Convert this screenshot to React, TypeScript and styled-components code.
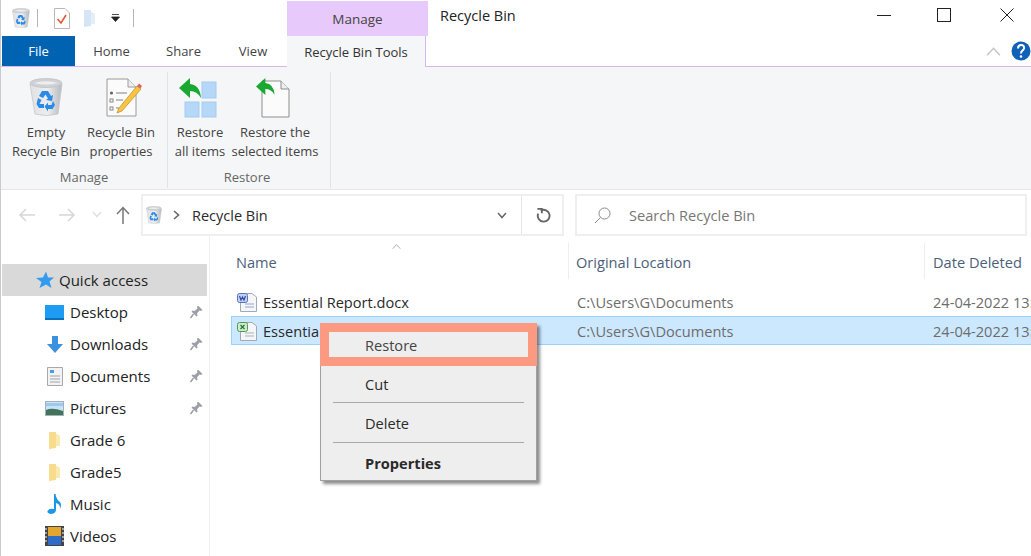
import React from "react";
import styled, { createGlobalStyle } from "styled-components";

const GlobalStyle = createGlobalStyle`
  html, body {
    margin: 0;
    padding: 0;
    background: #fff;
    overflow: hidden;
  }
  * {
    box-sizing: border-box;
  }
`;

const Page = styled.div`
  width: 1031px;
  height: 556px;
  display: flex;
  flex-direction: column;
  overflow: hidden;
  position: relative;
  background: #fff;
  color: #2a2a2a;
  font-family: "Open Sans", "Noto Sans", sans-serif;
  font-size: 15px;
  border-left: 1px solid #c9c9d2;
`;

const TitleRow = styled.div`
  height: 36px;
  display: flex;
  flex: none;
`;

const QuickBar = styled.div`
  width: 286px;
  display: flex;
  align-items: center;
  padding-left: 11px;
`;

const QuickDivider = styled.div<{ $left: number; $right: number }>`
  width: 1px;
  height: 18px;
  background: #b5b5b5;
  margin: 0 ${(p) => p.$right}px 0 ${(p) => p.$left}px;
`;

const QuickSpacer = styled.span<{ $width: number }>`
  width: ${(p) => p.$width}px;
  flex: none;
`;

const ManageTab = styled.div`
  width: 141px;
  height: 35px;
  margin-top: 1px;
  background: #e8c9fb;
  color: #444;
  font-size: 13.5px;
  display: flex;
  align-items: center;
  justify-content: center;
`;

const WindowTitle = styled.div`
  margin-left: 12px;
  font-size: 14.5px;
  line-height: 32px;
  flex: 1;
  color: #222;
`;

const WindowControls = styled.div`
  display: flex;
  align-items: flex-start;
  padding: 8px 17px 0 0;
`;

const WindowControl = styled.span<{ $left?: number }>`
  display: flex;
  margin-left: ${(p) => p.$left ?? 0}px;
`;

const TabRow = styled.div`
  height: 31px;
  flex: none;
  display: flex;
  border-bottom: 1px solid #d6b8ee;
  padding-left: 1px;
`;

const FileTab = styled.div`
  width: 73px;
  height: 30px;
  background: #0063b1;
  color: #fff;
  font-size: 13px;
  display: flex;
  align-items: center;
  justify-content: center;
`;

const Tab = styled.div<{ $width: number }>`
  width: ${(p) => p.$width}px;
  height: 30px;
  font-size: 13px;
  color: #444;
  display: flex;
  align-items: center;
  justify-content: center;
`;

const ActiveTab = styled(Tab)`
  height: 31px;
  background: #f5f6f7;
  color: #333;
  border-right: 1px solid #d6b8ee;
  margin-right: auto;
`;

const TabTools = styled.div`
  display: flex;
  align-items: center;
  height: 30px;
  gap: 10px;
`;

const Ribbon = styled.div`
  height: 123px;
  flex: none;
  background: #f5f6f7;
  display: flex;
  border-bottom: 1px solid #e6e6e6;
`;

const RibbonGroup = styled.div<{ $width: number; $pad: number }>`
  width: ${(p) => p.$width}px;
  display: flex;
  flex-direction: column;
  align-items: stretch;
  padding-left: ${(p) => p.$pad}px;
  border-right: 1px solid #e2e3e5;
  margin-top: 5px;
  margin-bottom: 1px;
`;

const RibbonButtons = styled.div`
  display: flex;
  flex: 1;
`;

const RibbonButton = styled.div<{ $width: number }>`
  width: ${(p) => p.$width}px;
  display: flex;
  flex-direction: column;
  align-items: center;
  padding-top: 5px;
`;

const RibbonIcon = styled.div<{ $shift?: number }>`
  height: 41px;
  display: flex;
  align-items: center;
  justify-content: center;
  margin-left: ${(p) => p.$shift ?? 0}px;
`;

const RibbonLabel = styled.div`
  margin-top: 5px;
  font-size: 13px;
  line-height: 19px;
  text-align: center;
  white-space: nowrap;
  color: #444;
`;

const GroupLabel = styled.div<{ $shift: number }>`
  text-align: center;
  font-size: 13px;
  line-height: 20px;
  height: 21px;
  color: #666;
  margin-left: ${(p) => p.$shift}px;
`;

const AddressRow = styled.div`
  height: 46px;
  flex: none;
  padding-top: 4px;
  padding-right: 4px;
  display: flex;
  align-items: flex-start;
`;

const NavButtons = styled.div`
  width: 140px;
  height: 41px;
  display: flex;
  align-items: center;
  padding-left: 17px;
`;

const NavSlot = styled.span<{ $left: number }>`
  display: flex;
  margin-left: ${(p) => p.$left}px;
`;

const AddressBox = styled.div`
  width: 423px;
  height: 42px;
  background: #fff;
  border: 2px solid #efefef;
  display: flex;
  align-items: center;
  padding-left: 3px;
`;

const Crumb = styled.span`
  display: flex;
  margin-left: 11px;
`;

const AddressText = styled.div`
  margin-left: 12px;
  flex: 1;
  font-size: 14.5px;
  color: #2a2a2a;
`;

const AddressTool = styled.div<{ $divider?: boolean }>`
  width: ${(p) => (p.$divider ? 41 : 38)}px;
  height: 100%;
  display: flex;
  align-items: center;
  justify-content: center;
  border-left: ${(p) => (p.$divider ? "1px solid #e5e5e5" : "none")};
`;

const SearchBox = styled.div`
  margin-left: 11px;
  flex: 1;
  height: 42px;
  background: #fff;
  border: 2px solid #efefef;
  display: flex;
  align-items: center;
  padding-left: 17px;
  gap: 18px;
  font-size: 14.6px;
  color: #777;
`;

const Body = styled.div`
  flex: 1;
  display: flex;
  min-height: 0;
  position: relative;
`;

const Sidebar = styled.div`
  width: 209px;
  flex: none;
  border-right: 1px solid #f1f1f1;
  padding: 28px 0 0 1px;
`;

const NavRow = styled.div<{ $active?: boolean; $indent: number; $gap: number }>`
  height: 32px;
  display: flex;
  align-items: center;
  padding: 0 6px 0 ${(p) => p.$indent}px;
  gap: ${(p) => p.$gap}px;
  background: ${(p) => (p.$active ? "#d9d9d9" : "transparent")};
  width: ${(p) => (p.$active ? "205px" : "207px")};
  font-size: 15px;
  color: #222;
`;

const NavLabel = styled.span`
  flex: 1;
`;

const NavIconSlot = styled.span`
  width: 19px;
  display: flex;
  justify-content: center;
  flex: none;
`;

const Main = styled.div`
  flex: 1;
  min-width: 0;
  position: relative;
`;

const SortArrow = styled.div`
  position: absolute;
  left: 182px;
  top: 7px;
  line-height: 0;
`;

const HeaderRow = styled.div`
  height: 36px;
  margin-top: 7px;
  display: flex;
  align-items: center;
  color: #4c607a;
  font-size: 14.6px;
`;

const HeaderCell = styled.div<{ $width: number; $pad: number; $line?: boolean }>`
  width: ${(p) => p.$width}px;
  height: 100%;
  flex: none;
  padding-left: ${(p) => p.$pad}px;
  padding-top: 1px;
  display: flex;
  align-items: center;
  white-space: nowrap;
  border-left: ${(p) => (p.$line ? "1px solid #eeeeee" : "none")};
`;

const Rows = styled.div`
  margin-top: 8px;
  margin-left: 21px;
`;

const FileRow = styled.div<{ $selected?: boolean }>`
  height: 29px;
  display: flex;
  align-items: center;
  background: ${(p) => (p.$selected ? "#cce8ff" : "transparent")};
  border: 1px solid ${(p) => (p.$selected ? "#99d1ff" : "transparent")};
  border-right: none;
  padding-top: 1px;
  white-space: nowrap;
  font-size: 14.6px;
`;

const NameCell = styled.div`
  width: 345px;
  flex: none;
  display: flex;
  align-items: center;
  gap: 6px;
  padding-left: 5px;
  color: #2a2a2a;
`;

const LocationCell = styled.div`
  width: 356px;
  flex: none;
  color: #6d6d6d;
`;

const DateCell = styled.div`
  flex: none;
  color: #6d6d6d;
`;

const ContextMenu = styled.div`
  position: absolute;
  left: 319px;
  top: 87px;
  width: 217px;
  height: 158px;
  background: #eeeeee;
  border: 1px solid #a0a0a0;
  box-shadow: 3px 3px 3px rgba(0, 0, 0, 0.45);
  font-size: 14.6px;
  color: #2a2a2a;
`;

const RestoreItem = styled.div`
  margin: -1px -1px 0;
  height: 43px;
  border: 9px solid #fb9a80;
  padding-left: 36px;
  display: flex;
  align-items: center;
  color: #444;
`;

const MenuItem = styled.div<{ $height: number; $bold?: boolean }>`
  height: ${(p) => p.$height}px;
  padding-left: 44px;
  display: flex;
  align-items: center;
  font-weight: ${(p) => (p.$bold ? 700 : 400)};
`;

const MenuDivider = styled.div`
  height: 1px;
  background: #a8a8a8;
  margin: 0 12px;
`;

const RecycleIcon = ({ size }: { size: number }) => (
  <svg width={size} height={size * 1.15} viewBox="0 0 34 39">
    <defs>
      <linearGradient id="binFill" x1="0" x2="1" y1="0" y2="0">
        <stop offset="0" stopColor="#dfe1e3" />
        <stop offset="0.55" stopColor="#eceeef" />
        <stop offset="1" stopColor="#b4b8bc" />
      </linearGradient>
    </defs>
    <path d="M1 6 L33 6 L29 36 Q17 39 6 36 Z" fill="url(#binFill)" stroke="#c5c8cb" strokeWidth="0.8" />
    <ellipse cx="17" cy="5" rx="16" ry="4.5" fill="#cfd2d5" stroke="#bfc2c5" strokeWidth="0.8" />
    <path d="M5 5 Q17 1.500 29 5 Q17 8 5 5 Z" fill="#eeeeee" />
    <path d="M13 13 L19 13 L22 18 L24 17 L23 23 L17 22 L19 20.500 L16.500 16.500 L14 20 L10 18 Z" fill="#2a8ae6" />
    <path d="M9 20 L12.500 22 L10.500 26 L15 26 L15 30 L10 30 L7.500 26 Z" fill="#2a8ae6" />
    <path d="M24 23 L26 27 L23.500 31 L19 31 L19 33.500 L15.500 28.500 L19 24.500 L19 27 L22.500 27 Z" fill="#2a8ae6" />
  </svg>
);

const PropertiesIcon = () => (
  <svg width="36" height="39" viewBox="0 0 36 39">
    <path d="M1 1 H22 L30 9 V38 H1 Z" fill="#fbfbfb" stroke="#9a9a9a" />
    <path d="M22 1 V9 H30" fill="#eee" stroke="#9a9a9a" />
    <circle cx="5.500" cy="15" r="1.600" fill="#666" />
    <rect x="4" y="21" width="3" height="3" fill="none" stroke="#888" />
    <rect x="4" y="29" width="3" height="3" fill="none" stroke="#888" />
    <path d="M10 15 H21 M10 22 H17 M10 30 H13" stroke="#aaa" strokeWidth="1.500" />
    <path d="M11 35 L13 30 L31 8 L35 11 L16 33 Z" fill="#f6c544" stroke="#c08a1c" strokeWidth="0.7" />
    <path d="M31 8 L33 5.500 L36 8 L34.500 10.500 Z" fill="#e0635f" />
  </svg>
);

const GreenArrow = () => (
  <path d="M0 10 L11 0 L11 6 Q21 7 22 20 Q18 13 11 13 L11 20 Z" fill="#19a831" />
);

const RestoreAllIcon = () => (
  <svg width="38" height="40" viewBox="0 0 38 40">
    <rect x="23" y="4" width="14" height="16" fill="#b6d8f8" stroke="#a5cbef" />
    <rect x="6" y="24" width="14" height="15" fill="#b6d8f8" stroke="#a5cbef" />
    <rect x="23" y="24" width="14" height="15" fill="#b6d8f8" stroke="#a5cbef" />
    <GreenArrow />
  </svg>
);

const RestoreSelectedIcon = () => (
  <svg width="34" height="40" viewBox="0 0 34 40">
    <path d="M6 3 H25 L33 11 V39 H6 Z" fill="#fbfbfb" stroke="#8d8d8d" />
    <path d="M25 3 V11 H33" fill="#eee" stroke="#8d8d8d" />
    <g transform="scale(0.85)">
      <GreenArrow />
    </g>
  </svg>
);

const CheckDocIcon = () => (
  <svg width="16" height="21" viewBox="0 0 16 21">
    <path d="M0.500 0.500 H11 L15.500 5 V20.500 H0.500 Z" fill="#fff" stroke="#b9b9b9" />
    <path d="M3.500 11 L7 15 L12 7" fill="none" stroke="#e2572f" strokeWidth="1.600" />
  </svg>
);

const SmallFolder = ({ pale }: { pale?: boolean }) => (
  <svg width="14" height="19" viewBox="0 0 14 19">
    <path d="M1 1 H8 L8 3 L12 5 V15 L8 15 L8 17 L1 18 Z" fill={pale ? "#d6e5f5" : "#f8dc8c"} />
    <path d="M8 3 L12 5 V15 H8 Z" fill={pale ? "#e3eef9" : "#fbe9b0"} />
  </svg>
);

const DropArrow = () => (
  <svg width="9" height="8" viewBox="0 0 9 8">
    <path d="M1 0.500 H8 M0.500 3 H8.500 L4.500 7.500 Z" fill="#222" stroke="#222" strokeWidth="0.8" />
  </svg>
);

const MinimizeIcon = () => (
  <svg width="14" height="14" viewBox="0 0 14 14">
    <path d="M0 7.500 H14" stroke="#222" />
  </svg>
);

const MaximizeIcon = () => (
  <svg width="14" height="14" viewBox="0 0 14 14">
    <rect x="0.500" y="0.500" width="13" height="13" fill="none" stroke="#222" />
  </svg>
);

const CloseIcon = () => (
  <svg width="14" height="14" viewBox="0 0 14 14">
    <path d="M0.500 0.500 L13.500 13.500 M13.500 0.500 L0.500 13.500" stroke="#222" />
  </svg>
);

const HelpIcon = () => (
  <svg width="20" height="20" viewBox="0 0 20 20">
    <circle cx="10" cy="10" r="9.500" fill="#0f62b8" />
    <path d="M7 7.500 Q7 4 10 4 Q13.500 4 13 7.500 Q12.500 9 11 10 Q10 11 10 12.500" fill="none" stroke="#fff" strokeWidth="2" />
    <circle cx="10" cy="15.500" r="1.300" fill="#fff" />
  </svg>
);

const ChevronUp = ({ color, w, h }: { color: string; w: number; h: number }) => (
  <svg width={w} height={h} viewBox="0 0 14 8">
    <path d="M1 7.500 L7 1 L13 7.500" fill="none" stroke={color} strokeWidth="1.300" />
  </svg>
);

const ArrowLeft = ({ flip }: { flip?: boolean }) => (
  <svg width="18" height="14" viewBox="0 0 18 14" style={flip ? { transform: "scaleX(-1)" } : undefined}>
    <path d="M17 7 H2 M8 1 L2 7 L8 13" fill="none" stroke="#d6d6d6" strokeWidth="1.500" />
  </svg>
);

const SmallChevron = ({ color }: { color: string }) => (
  <svg width="10" height="7" viewBox="0 0 10 7">
    <path d="M1 1 L5 5.500 L9 1" fill="none" stroke={color} strokeWidth="1.500" />
  </svg>
);

const ArrowUp = () => (
  <svg width="14" height="18" viewBox="0 0 14 18">
    <path d="M7 18 V2 M1 8 L7 1.500 L13 8" fill="none" stroke="#777" strokeWidth="1.500" />
  </svg>
);

const CrumbChevron = () => (
  <svg width="7" height="10" viewBox="0 0 7 10">
    <path d="M1 1 L5.500 5 L1 9" fill="none" stroke="#666" strokeWidth="1.600" />
  </svg>
);

const RefreshIcon = () => (
  <svg width="15" height="15" viewBox="0 0 16 16" style={{ marginLeft: 3 }}>
    <path d="M5 2.800 A6.300 6.300 0 1 1 2.300 6" fill="none" stroke="#666" strokeWidth="2" />
    <path d="M1.500 0.800 H6.200 V5.500" fill="none" stroke="#666" strokeWidth="2" />
  </svg>
);

const SearchIcon = () => (
  <svg width="17" height="17" viewBox="0 0 17 17">
    <circle cx="10.500" cy="6.500" r="5.500" fill="none" stroke="#8a8a8a" />
    <path d="M6.500 10.500 L1 16" stroke="#8a8a8a" />
  </svg>
);

const StarIcon = () => (
  <svg width="18" height="18" viewBox="0 0 18 18">
    <path d="M10 0.500 L12 6.500 L18 6.500 L13.500 10.500 L15.500 17 L10 13.500 L3.500 17 L5.500 11 L0 7 L7 6.500 Z" fill="#339af0" />
  </svg>
);

const PinIcon = () => (
  <svg width="13" height="14" viewBox="0 0 13 14">
    <path d="M8 0.500 L12.500 5 L11 6 L9.500 5.500 L7 8.500 L7.500 10.500 L6.500 11.500 L1.500 6.500 L2.500 5.500 L4.500 6 L7.500 3.500 L7 2 Z" fill="#9aa0a6" />
    <path d="M3.500 9 L0.500 13" stroke="#9aa0a6" strokeWidth="1.500" />
  </svg>
);

const DesktopIcon = () => (
  <svg width="19" height="15" viewBox="0 0 19 15">
    <rect width="19" height="15" fill="#1c9cf2" />
    <rect y="13" width="19" height="2" fill="#0b6fbd" />
  </svg>
);

const DownloadIcon = () => (
  <svg width="16" height="17" viewBox="0 0 16 17">
    <path d="M5 0 H11 V8 H16 L8 17 L0 8 H5 Z" fill="#3d8fe0" />
  </svg>
);

const DocumentsIcon = () => (
  <svg width="16" height="19" viewBox="0 0 16 19">
    <path d="M0.500 0.500 H15.500 V18.500 H0.500 Z" fill="#f3f3f3" stroke="#a8a8a8" />
    <rect x="3" y="3" width="4" height="3" fill="#4a9be3" />
    <path d="M3 9 H13 M3 12 H13 M3 15 H13" stroke="#9aa5ad" />
  </svg>
);

const PicturesIcon = () => (
  <svg width="19" height="15" viewBox="0 0 19 15">
    <rect x="0.500" y="0.500" width="18" height="14" fill="#c9e2f7" stroke="#a7b0b8" />
    <path d="M1 9 Q7 6 18 10 V14 H1 Z" fill="#41755a" />
    <rect x="1" y="2" width="17" height="3" fill="#9cc9ee" />
  </svg>
);

const MusicIcon = () => (
  <svg width="15" height="20" viewBox="0 0 15 20">
    <path d="M7 0 H8.500 Q9 5 13 8 Q15 11 13 15 Q13.500 10 9 9 V16 Q8.500 20 3.500 20 Q0 19.500 0.500 17 Q2 14 7 15 Z" fill="#1997e8" />
  </svg>
);

const VideosIcon = () => (
  <svg width="19" height="20" viewBox="0 0 19 20">
    <rect width="19" height="20" fill="#444" />
    <rect x="3" y="1" width="13" height="9" fill="#e3a72f" />
    <rect x="3" y="10" width="13" height="9" fill="#2f6bc9" />
    <path d="M1 2 V18 M18 2 V18" stroke="#ddd" strokeWidth="1.200" strokeDasharray="2 2" />
  </svg>
);

const OfficeFileIcon = ({ kind }: { kind: "word" | "excel" }) => (
  <svg width="20" height="20" viewBox="0 0 20 20">
    <path d="M5 1.500 H15 L19.500 5 V19.500 H3.500 V10 Z" fill="#f4f6f9" stroke="#a2a9b3" />
    <path d="M8 12 H17 M8 15 H17" stroke={kind === "word" ? "#8fa6d3" : "#a7b5a7"} />
    <rect x="0.500" y="1.500" width="10" height="9" rx="2" fill={kind === "word" ? "#c5cff0" : "#d0ead0"} stroke={kind === "word" ? "#5a6fc0" : "#4b9a55"} />
    <path
      d={kind === "word" ? "M2.500 4 L4 8 L5.500 5 L7 8 L8.500 4" : "M3.500 4 L7.500 8 M7.500 4 L3.500 8"}
      fill="none"
      stroke={kind === "word" ? "#2b4ea8" : "#1f7a31"}
      strokeWidth="1.200"
    />
  </svg>
);

const navItems = [
  { label: "Desktop", icon: <DesktopIcon />, pinned: true },
  { label: "Downloads", icon: <DownloadIcon />, pinned: true },
  { label: "Documents", icon: <DocumentsIcon />, pinned: true },
  { label: "Pictures", icon: <PicturesIcon />, pinned: true },
  { label: "Grade 6", icon: <SmallFolder />, pinned: false },
  { label: "Grade5", icon: <SmallFolder />, pinned: false },
  { label: "Music", icon: <MusicIcon />, pinned: false },
  { label: "Videos", icon: <VideosIcon />, pinned: false },
];

const App = () => {
  return (
    <Page>
      <GlobalStyle />
      <TitleRow>
        <QuickBar>
          <RecycleIcon size={18} />
          <QuickDivider $left={7} $right={16} />
          <CheckDocIcon />
          <QuickSpacer $width={13} />
          <SmallFolder pale />
          <QuickSpacer $width={14} />
          <DropArrow />
          <QuickDivider $left={13} $right={0} />
        </QuickBar>
        <ManageTab>Manage</ManageTab>
        <WindowTitle>Recycle Bin</WindowTitle>
        <WindowControls>
          <WindowControl>
            <MinimizeIcon />
          </WindowControl>
          <WindowControl $left={46}>
            <MaximizeIcon />
          </WindowControl>
          <WindowControl $left={49}>
            <CloseIcon />
          </WindowControl>
        </WindowControls>
      </TitleRow>

      <TabRow>
        <FileTab>File</FileTab>
        <Tab $width={73}>Home</Tab>
        <Tab $width={71}>Share</Tab>
        <Tab $width={68}>View</Tab>
        <ActiveTab $width={139}>Recycle Bin Tools</ActiveTab>
        <TabTools>
          <ChevronUp color="#c4c4c4" w={15} h={9} />
          <HelpIcon />
        </TabTools>
      </TabRow>

      <Ribbon>
        <RibbonGroup $width={167} $pad={5}>
          <RibbonButtons>
            <RibbonButton $width={80}>
              <RibbonIcon>
                <RecycleIcon size={34} />
              </RibbonIcon>
              <RibbonLabel>
                Empty
                <br />
                Recycle Bin
              </RibbonLabel>
            </RibbonButton>
            <RibbonButton $width={70}>
              <RibbonIcon $shift={6}>
                <PropertiesIcon />
              </RibbonIcon>
              <RibbonLabel>
                Recycle Bin
                <br />
                properties
              </RibbonLabel>
            </RibbonButton>
          </RibbonButtons>
          <GroupLabel $shift={-5}>Manage</GroupLabel>
        </RibbonGroup>
        <RibbonGroup $width={163} $pad={0}>
          <RibbonButtons>
            <RibbonButton $width={64}>
              <RibbonIcon $shift={-5}>
                <RestoreAllIcon />
              </RibbonIcon>
              <RibbonLabel>
                Restore
                <br />
                all items
              </RibbonLabel>
            </RibbonButton>
            <RibbonButton $width={86}>
              <RibbonIcon $shift={-4}>
                <RestoreSelectedIcon />
              </RibbonIcon>
              <RibbonLabel>
                Restore the
                <br />
                selected items
              </RibbonLabel>
            </RibbonButton>
          </RibbonButtons>
          <GroupLabel $shift={-4}>Restore</GroupLabel>
        </RibbonGroup>
      </Ribbon>

      <AddressRow>
        <NavButtons>
          <ArrowLeft />
          <NavSlot $left={22}>
            <ArrowLeft flip />
          </NavSlot>
          <NavSlot $left={16}>
            <SmallChevron color="#e0e0e0" />
          </NavSlot>
          <NavSlot $left={14}>
            <ArrowUp />
          </NavSlot>
        </NavButtons>
        <AddressBox>
          <RecycleIcon size={16} />
          <Crumb>
            <CrumbChevron />
          </Crumb>
          <AddressText>Recycle Bin</AddressText>
          <AddressTool>
            <SmallChevron color="#666" />
          </AddressTool>
          <AddressTool $divider>
            <RefreshIcon />
          </AddressTool>
        </AddressBox>
        <SearchBox>
          <SearchIcon />
          Search Recycle Bin
        </SearchBox>
      </AddressRow>

      <Body>
        <Sidebar>
          <NavRow $active $indent={34} $gap={5}>
            <StarIcon />
            <NavLabel>Quick access</NavLabel>
          </NavRow>
          {navItems.map((item) => (
            <NavRow key={item.label} $indent={43} $gap={6}>
              <NavIconSlot>{item.icon}</NavIconSlot>
              <NavLabel>{item.label}</NavLabel>
              {item.pinned && <PinIcon />}
            </NavRow>
          ))}
        </Sidebar>
        <Main>
          <SortArrow>
            <ChevronUp color="#9a9a9a" w={9} h={5} />
          </SortArrow>
          <HeaderRow>
            <HeaderCell $width={358} $pad={26}>
              Name
            </HeaderCell>
            <HeaderCell $width={356} $pad={7} $line>
              Original Location
            </HeaderCell>
            <HeaderCell $width={120} $pad={8} $line>
              Date Deleted
            </HeaderCell>
          </HeaderRow>
          <Rows>
            <FileRow>
              <NameCell>
                <OfficeFileIcon kind="word" />
                Essential Report.docx
              </NameCell>
              <LocationCell>C:\Users\G\Documents</LocationCell>
              <DateCell>24-04-2022 13:00</DateCell>
            </FileRow>
            <FileRow $selected>
              <NameCell>
                <OfficeFileIcon kind="excel" />
                Essential Report.xlsx
              </NameCell>
              <LocationCell>C:\Users\G\Documents</LocationCell>
              <DateCell>24-04-2022 13:00</DateCell>
            </FileRow>
          </Rows>
        </Main>
        <ContextMenu>
          <RestoreItem>Restore</RestoreItem>
          <MenuItem $height={36}>Cut</MenuItem>
          <MenuDivider />
          <MenuItem $height={39}>Delete</MenuItem>
          <MenuDivider />
          <MenuItem $height={39} $bold>
            Properties
          </MenuItem>
        </ContextMenu>
      </Body>
    </Page>
  );
};

export default App;
